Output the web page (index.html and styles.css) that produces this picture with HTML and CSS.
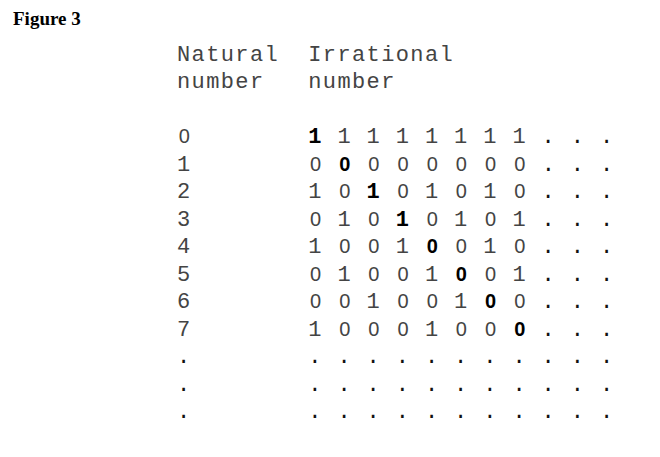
FILE: index.html
```html
<!DOCTYPE html>
<html>
<head>
<meta charset="utf-8">
<link rel="stylesheet" href="styles.css">
</head>
<body>
<div class="page">
<h1 class="title">Figure 3</h1>
<pre class="table">Natural  Irrational
number   number

<span class="z">0</span>        <b>1</b> 1 1 1 1 1 1 1 <span class="d">. . .</span>
1        <span class="z">0</span> <b class="z">0</b> <span class="z">0</span> <span class="z">0</span> <span class="z">0</span> <span class="z">0</span> <span class="z">0</span> <span class="z">0</span> <span class="d">. . .</span>
2        1 <span class="z">0</span> <b>1</b> <span class="z">0</span> 1 <span class="z">0</span> 1 <span class="z">0</span> <span class="d">. . .</span>
3        <span class="z">0</span> 1 <span class="z">0</span> <b>1</b> <span class="z">0</span> 1 <span class="z">0</span> 1 <span class="d">. . .</span>
4        1 <span class="z">0</span> <span class="z">0</span> 1 <b class="z">0</b> <span class="z">0</span> 1 <span class="z">0</span> <span class="d">. . .</span>
5        <span class="z">0</span> 1 <span class="z">0</span> <span class="z">0</span> 1 <b class="z">0</b> <span class="z">0</span> 1 <span class="d">. . .</span>
6        <span class="z">0</span> <span class="z">0</span> 1 <span class="z">0</span> <span class="z">0</span> 1 <b class="z">0</b> <span class="z">0</span> <span class="d">. . .</span>
7        1 <span class="z">0</span> <span class="z">0</span> <span class="z">0</span> 1 <span class="z">0</span> <span class="z">0</span> <b class="z">0</b> <span class="d">. . .</span>
<span class="d">.        . . . . . . . . . . .</span>
<span class="d">.        . . . . . . . . . . .</span>
<span class="d">.        . . . . . . . . . . .</span></pre>
</div>
</body>
</html>
```

FILE: styles.css
```css
html, body {
  margin: 0;
  padding: 0;
  background: #ffffff;
}

.page {
  width: 660px;
  height: 457px;
  overflow: hidden;
}

.title {
  margin: 0;
  padding: 8px 0 0 13px;
  font-family: "Liberation Serif", "Times New Roman", serif;
  font-weight: bold;
  font-size: 19px;
  line-height: normal;
  color: #000;
}

.table {
  margin: 11.5px 0 0 177px;
  font-family: "Liberation Mono", "Courier New", monospace;
  font-size: 22px;
  letter-spacing: 1.38px;
  line-height: 27.5px;
  color: #444;
}

.table b {
  font-weight: bold;
  color: #000;
}

.table .z {
  display: inline-block;
  width: 14.58px;
  text-align: center;
  letter-spacing: 0;
  font-family: "Liberation Sans", Arial, sans-serif;
  font-size: 20px;
  line-height: 1;
}

.table b.z {
  font-weight: bold;
  color: #000;
}

.table .d {
  color: #111;
}
```
